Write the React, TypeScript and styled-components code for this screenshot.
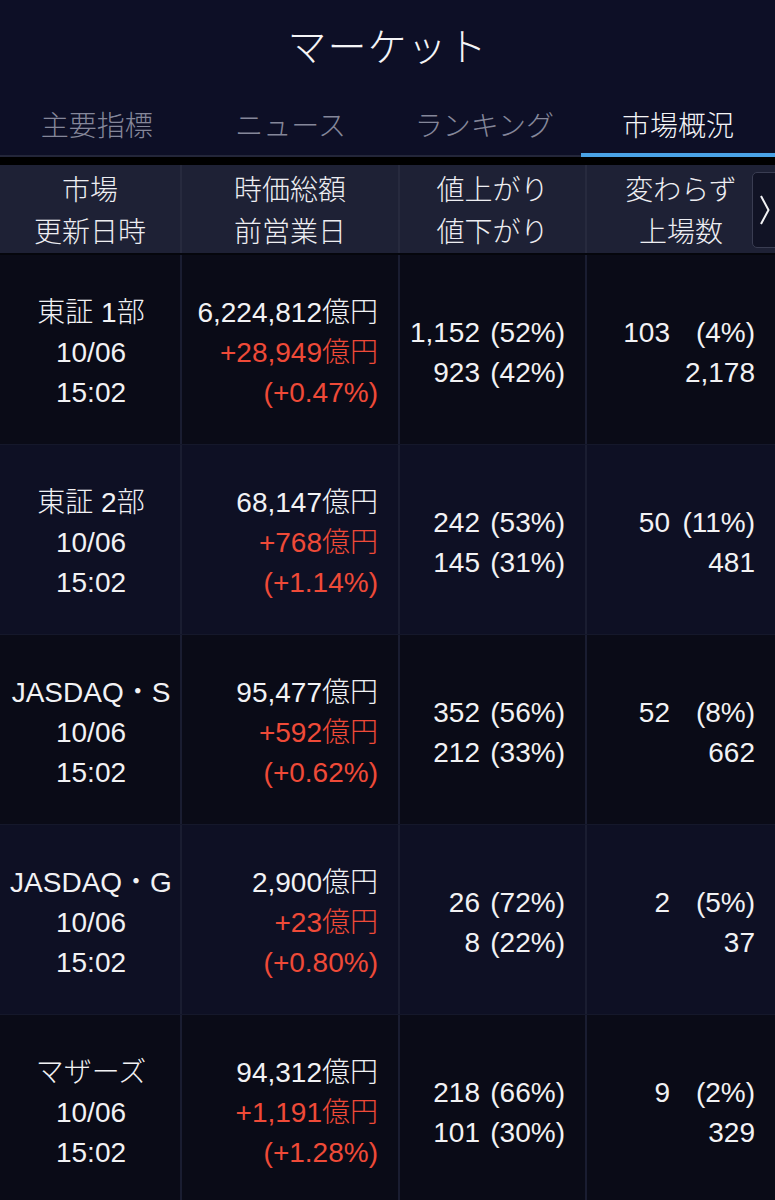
import React from 'react';
import styled, { createGlobalStyle } from 'styled-components';

interface MarketRow {
    name: string;
    date: string;
    time: string;
    cap: string;
    diff: string;
    rate: string;
    up: [string, string];
    down: [string, string];
    flat: [string, string];
    listed: string;
}

const GlobalStyle = createGlobalStyle`
    html, body {
        margin: 0;
        padding: 0;
        background: #000;
    }
    body {
        font-family: "Liberation Sans", "Noto Sans CJK JP", sans-serif;
        color: #f2f2f4;
    }
`;

const Page = styled.div`
    width: 775px;
    height: 1200px;
    overflow: hidden;
    background: #000;
`;

const TopBar = styled.div`
    background: #0d0f26;
    border-bottom: 2px solid #23263a;
`;

const Title = styled.h1`
    margin: 0;
    height: 95px;
    padding-bottom: 8px;
    box-sizing: border-box;
    display: flex;
    align-items: center;
    justify-content: center;
    font-family: "Noto Sans CJK JP", sans-serif;
    font-weight: 300;
    font-size: 39px;
    letter-spacing: 1px;
    color: #f4f4f6;
`;

const Tabs = styled.div`
    display: grid;
    grid-template-columns: repeat(4, 1fr);
    height: 60px;
`;

const Tab = styled.div<{ $active?: boolean }>`
    display: flex;
    align-items: center;
    justify-content: center;
    font-family: "Noto Sans CJK JP", sans-serif;
    font-weight: 300;
    font-size: 28px;
    color: ${p => (p.$active ? '#f4f4f6' : '#85879a')};
    border-bottom: 4px solid ${p => (p.$active ? '#4aa3e6' : 'transparent')};
    margin-bottom: -2px;
`;

const Table = styled.div`
    margin-top: 8px;
`;

const HeaderRow = styled.div`
    position: relative;
    display: grid;
    grid-template-columns: 180px 218px 187px 190px;
    height: 88px;
    background: #1e2135;
    border-bottom: 2px solid #05060c;
`;

const HeaderCell = styled.div<{ $first?: boolean }>`
    display: flex;
    flex-direction: column;
    align-items: center;
    justify-content: center;
    font-family: "Noto Sans CJK JP", sans-serif;
    font-weight: 300;
    font-size: 28px;
    line-height: 42px;
    color: #eeeef2;
    border-left: ${p => (p.$first ? 'none' : '2px solid #272a3e')};
`;

const ScrollButton = styled.div`
    position: absolute;
    top: 7px;
    right: -8px;
    width: 31px;
    height: 76px;
    box-sizing: border-box;
    background: #111325;
    border: 1px solid #3a3d52;
    border-radius: 5px;
    display: flex;
    align-items: center;
    padding-left: 6px;
`;

const DataRow = styled.div<{ $alt?: boolean }>`
    display: grid;
    grid-template-columns: 180px 218px 187px 190px;
    height: 190px;
    box-sizing: border-box;
    background: ${p => (p.$alt ? '#0e1024' : '#0a0b17')};
    border-bottom: 1px solid #15182b;
`;

const Cell = styled.div<{ $align: 'center' | 'end'; $first?: boolean }>`
    display: flex;
    flex-direction: column;
    justify-content: center;
    align-items: ${p => (p.$align === 'center' ? 'center' : 'flex-end')};
    padding: ${p => (p.$align === 'center' ? '7px 0 0 2px' : '7px 20px 0 0')};
    font-size: 28px;
    font-weight: 300;
    line-height: 40px;
    border-left: ${p => (p.$first ? 'none' : '2px solid #1a1d31')};
`;

const Line = styled.div<{ $red?: boolean }>`
    white-space: nowrap;
    color: ${p => (p.$red ? '#ef4a38' : '#f2f2f4')};
`;

const Counts = styled.div`
    display: grid;
    grid-template-columns: auto 85px;
    line-height: 40px;
    white-space: nowrap;
`;

const Num = styled.span<{ $wide?: boolean }>`
    text-align: right;
    grid-column: ${p => (p.$wide ? '1 / -1' : 'auto')};
`;

const Pct = styled.span`
    text-align: right;
`;

const rows: MarketRow[] = [
    { name: '東証 1部', date: '10/06', time: '15:02', cap: '6,224,812億円', diff: '+28,949億円', rate: '(+0.47%)', up: ['1,152', '(52%)'], down: ['923', '(42%)'], flat: ['103', '(4%)'], listed: '2,178' },
    { name: '東証 2部', date: '10/06', time: '15:02', cap: '68,147億円', diff: '+768億円', rate: '(+1.14%)', up: ['242', '(53%)'], down: ['145', '(31%)'], flat: ['50', '(11%)'], listed: '481' },
    { name: 'JASDAQ・S', date: '10/06', time: '15:02', cap: '95,477億円', diff: '+592億円', rate: '(+0.62%)', up: ['352', '(56%)'], down: ['212', '(33%)'], flat: ['52', '(8%)'], listed: '662' },
    { name: 'JASDAQ・G', date: '10/06', time: '15:02', cap: '2,900億円', diff: '+23億円', rate: '(+0.80%)', up: ['26', '(72%)'], down: ['8', '(22%)'], flat: ['2', '(5%)'], listed: '37' },
    { name: 'マザーズ', date: '10/06', time: '15:02', cap: '94,312億円', diff: '+1,191億円', rate: '(+1.28%)', up: ['218', '(66%)'], down: ['101', '(30%)'], flat: ['9', '(2%)'], listed: '329' },
];

const tabs = ['主要指標', 'ニュース', 'ランキング', '市場概況'];

const App: React.FC = () => {
    return (
        <>
            <GlobalStyle />
            <Page>
                <TopBar>
                    <Title>マーケット</Title>
                    <Tabs>
                        {tabs.map((t, i) => (
                            <Tab key={t} $active={i === 3}>{t}</Tab>
                        ))}
                    </Tabs>
                </TopBar>

                <Table>
                    <HeaderRow>
                        <HeaderCell $first><span>市場</span><span>更新日時</span></HeaderCell>
                        <HeaderCell><span>時価総額</span><span>前営業日</span></HeaderCell>
                        <HeaderCell><span>値上がり</span><span>値下がり</span></HeaderCell>
                        <HeaderCell><span>変わらず</span><span>上場数</span></HeaderCell>
                        <ScrollButton>
                            <svg width="12" height="32" viewBox="0 0 12 32">
                                <path d="M2 2 L9.5 16 L2 30" fill="none" stroke="#f2f2f4" strokeWidth="2" />
                            </svg>
                        </ScrollButton>
                    </HeaderRow>

                    {rows.map((r, i) => (
                        <DataRow key={r.name} $alt={i % 2 === 1}>
                            <Cell $align="center" $first>
                                <Line>{r.name}</Line>
                                <Line>{r.date}</Line>
                                <Line>{r.time}</Line>
                            </Cell>
                            <Cell $align="end">
                                <Line>{r.cap}</Line>
                                <Line $red>{r.diff}</Line>
                                <Line $red>{r.rate}</Line>
                            </Cell>
                            <Cell $align="end">
                                <Counts>
                                    <Num>{r.up[0]}</Num><Pct>{r.up[1]}</Pct>
                                    <Num>{r.down[0]}</Num><Pct>{r.down[1]}</Pct>
                                </Counts>
                            </Cell>
                            <Cell $align="end">
                                <Counts>
                                    <Num>{r.flat[0]}</Num><Pct>{r.flat[1]}</Pct>
                                    <Num $wide>{r.listed}</Num>
                                </Counts>
                            </Cell>
                        </DataRow>
                    ))}
                </Table>
            </Page>
        </>
    );
};

export default App;
